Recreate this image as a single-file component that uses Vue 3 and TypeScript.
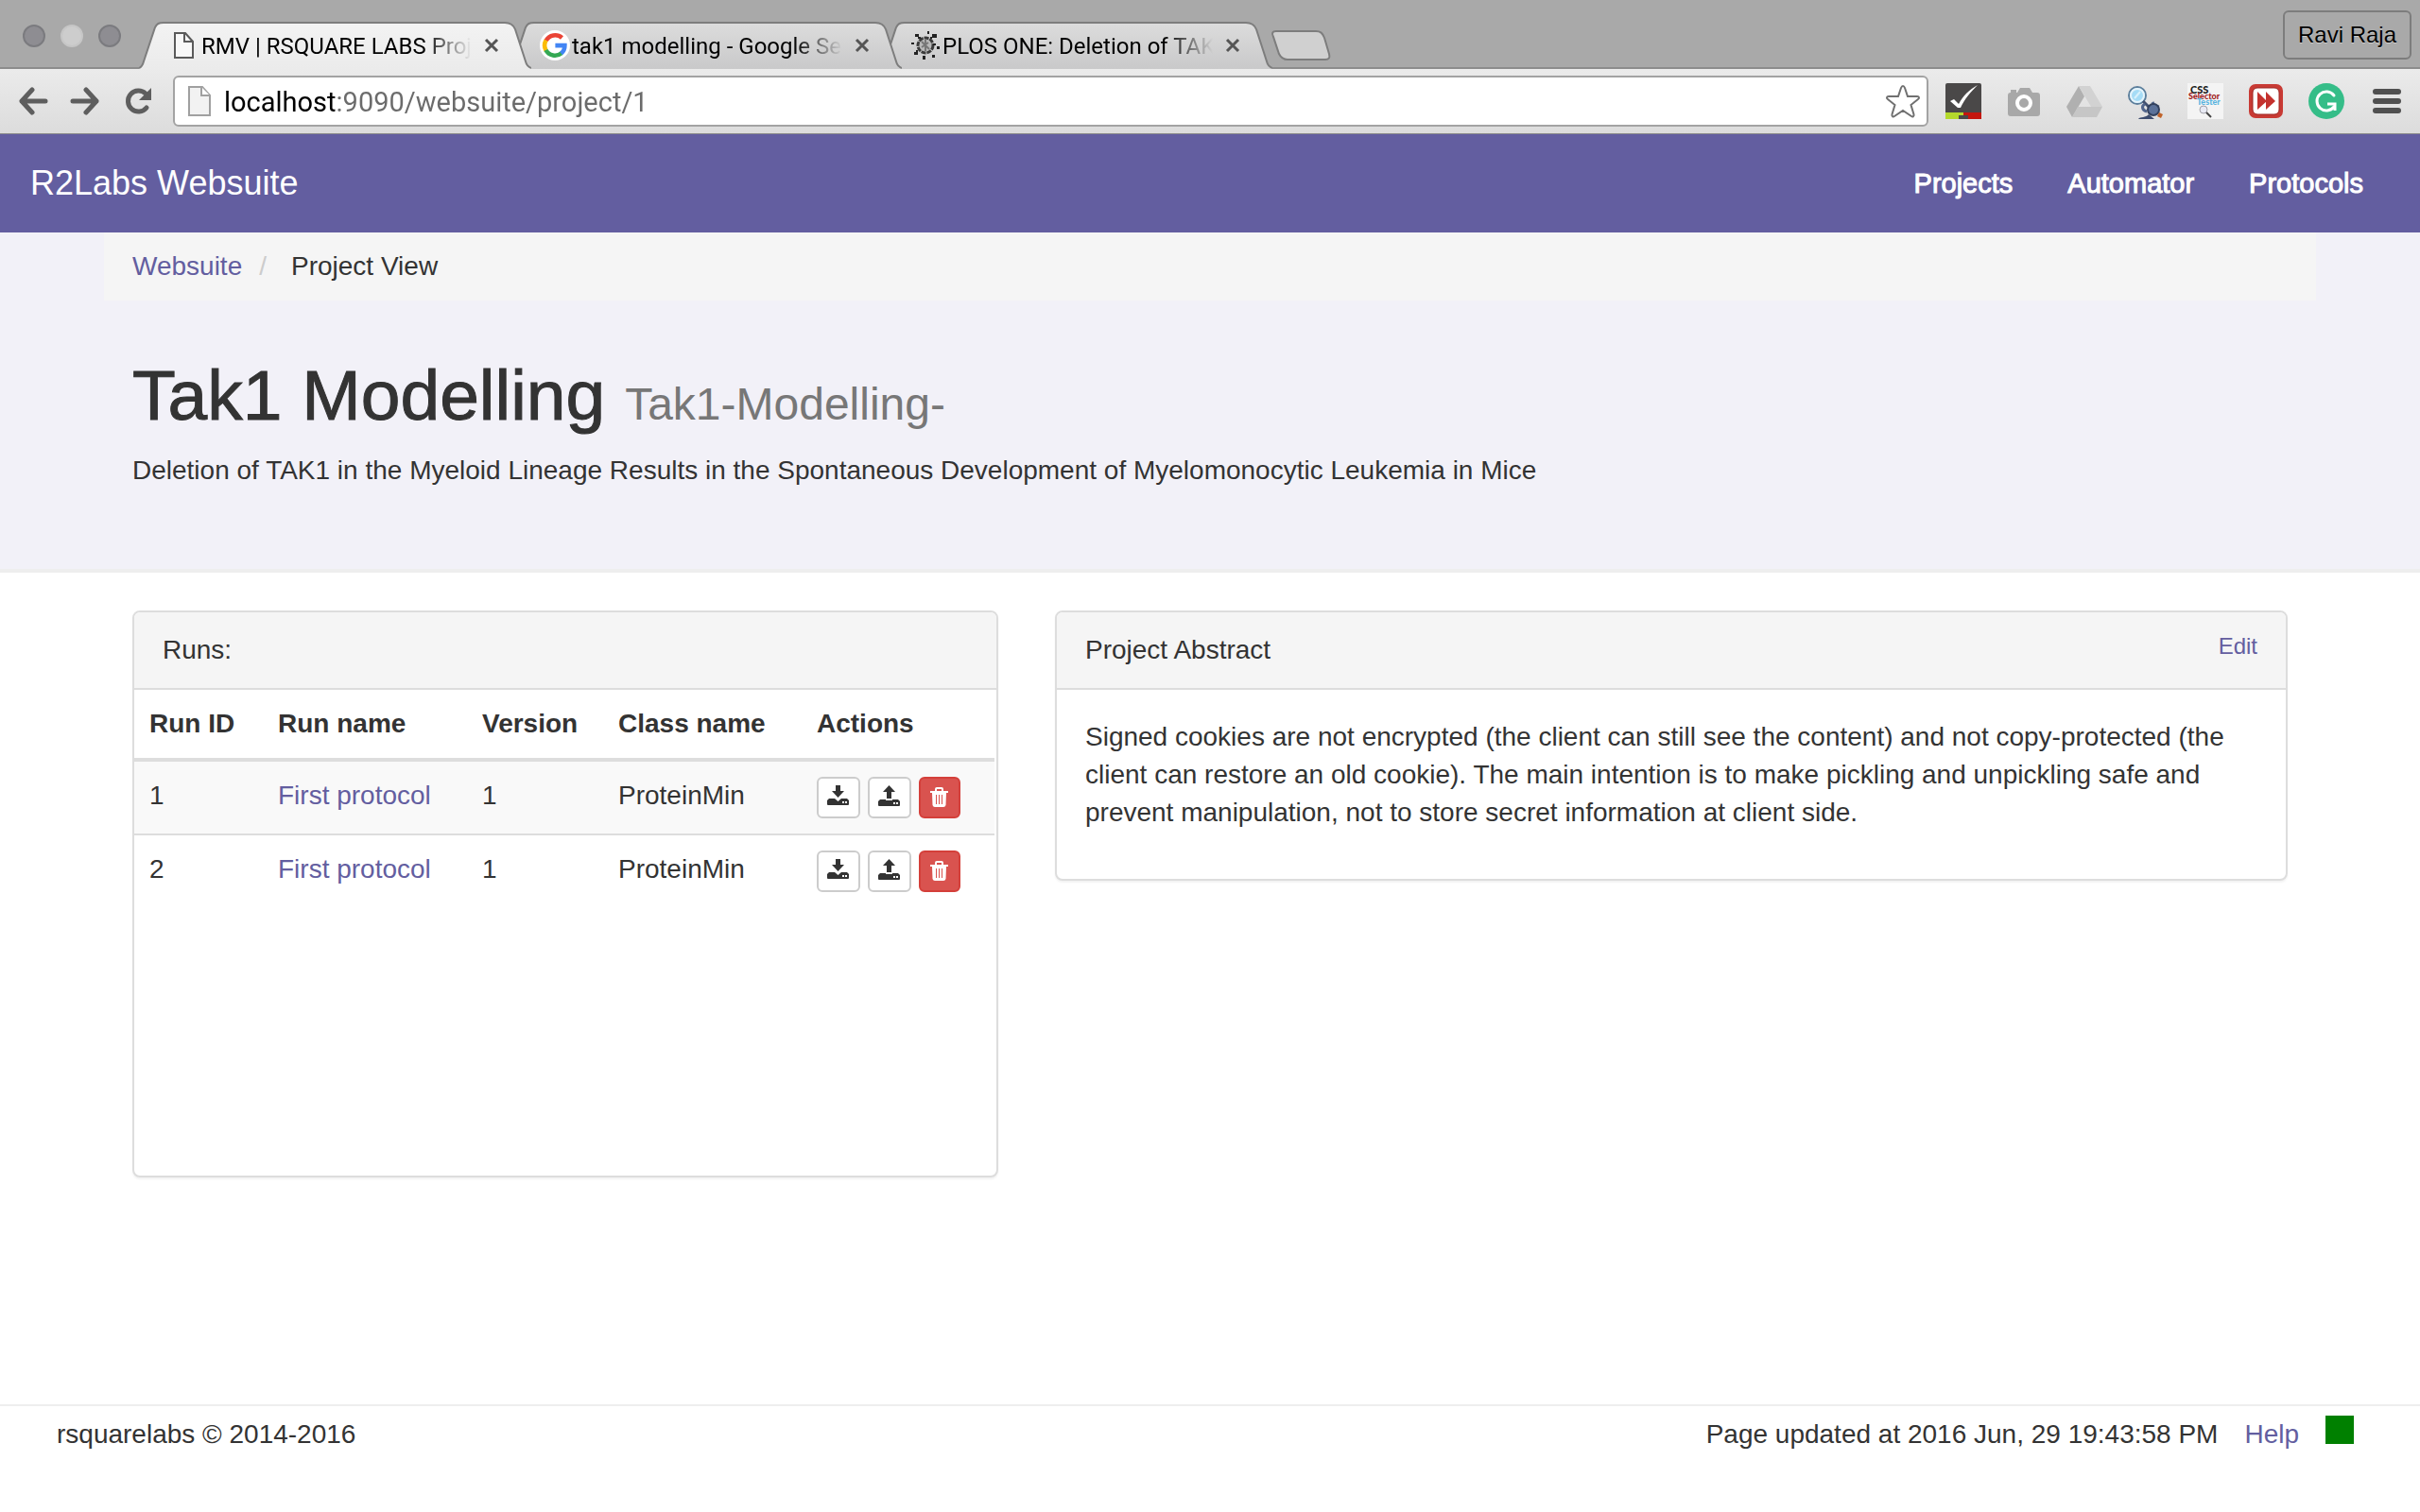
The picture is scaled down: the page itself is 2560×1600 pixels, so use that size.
<script setup lang="ts">
import { ref } from 'vue'

interface Tab {
  id: string
  title: string
  active: boolean
}

interface Run {
  id: number
  name: string
  version: number
  className: string
}

const tabs: Tab[] = [
  { id: 'page', title: 'RMV | RSQUARE LABS Proj', active: true },
  { id: 'google', title: 'tak1 modelling - Google Se', active: false },
  { id: 'plos', title: 'PLOS ONE: Deletion of TAK', active: false },
]

const address = ref('localhost:9090/websuite/project/1')

const navLinks: string[] = ['Projects', 'Automator', 'Protocols']

const columns: string[] = ['Run ID', 'Run name', 'Version', 'Class name', 'Actions']

const runs: Run[] = [
  { id: 1, name: 'First protocol', version: 1, className: 'ProteinMin' },
  { id: 2, name: 'First protocol', version: 1, className: 'ProteinMin' },
]
</script>

<template>
  <div class="window">
    <header class="chrome">
      <div class="tab-strip">
        <div class="lights">
          <span class="light"></span>
          <span class="light pale"></span>
          <span class="light"></span>
        </div>
        <div class="tabs">
          <div v-for="tab in tabs" :key="tab.id" class="tab" :class="{ active: tab.active }">
            <svg class="tab-shape" viewBox="0 0 415 50" preserveAspectRatio="none" aria-hidden="true">
              <defs>
                <linearGradient :id="'fill-' + tab.id" x1="0" y1="0" x2="0" y2="1">
                  <stop offset="0" :stop-color="tab.active ? '#f3f3f3' : '#dcdcdc'" />
                  <stop offset="1" :stop-color="tab.active ? '#ebebeb' : '#c9c9ca'" />
                </linearGradient>
              </defs>
              <path
                d="M0 49C3 48 4 46 5 42L17 6C19 2 21 1 26 1H387C393 1 396 3 398 8L409 42C410 46 412 48 415 49V50H0Z"
                :fill="'url(#fill-' + tab.id + ')'"
              />
              <path
                d="M0 49C3 48 4 46 5 42L17 6C19 2 21 1 26 1H387C393 1 396 3 398 8L409 42C410 46 412 48 415 49"
                fill="none" stroke="#7d7d7d" stroke-width="2"
              />
            </svg>
            <span class="favicon">
              <svg v-if="tab.id === 'page'" width="32" height="32" viewBox="0 0 32 32">
                <path d="M6 3H17L25 12V29H6Z" fill="#f8f8f8" stroke="#5a5a5a" stroke-width="2" />
                <path d="M16 3V12H25" fill="none" stroke="#5a5a5a" stroke-width="2" />
              </svg>
              <svg v-else-if="tab.id === 'google'" width="32" height="32" viewBox="0 0 32 32">
                <circle cx="16" cy="16" r="16" fill="#fff" />
                <path d="M6.6 11A11 11 0 0 1 23.5 8" fill="none" stroke="#ea4335" stroke-width="4.6" />
                <path d="M6.6 10.6A11 11 0 0 0 6.6 21.4" fill="none" stroke="#fbbc05" stroke-width="4.6" />
                <path d="M6.4 21A11 11 0 0 0 23 24.2" fill="none" stroke="#34a853" stroke-width="4.6" />
                <path d="M22.6 24.6A11 11 0 0 0 26.4 16.1H16.4" fill="none" stroke="#4285f4" stroke-width="4.6" />
              </svg>
              <svg v-else width="32" height="32" viewBox="0 0 32 32">
                <circle cx="16" cy="16" r="8" fill="#b9b9b9" stroke="#3a3a3a" stroke-width="3" stroke-dasharray="5 1" />
                <path d="M12 12L20 20M16 10V22M12 18L19 13" stroke="#777" stroke-width="2" />
                <path d="M5 4H9V7H5ZM23 4H28V8H23ZM18 1H20V4H18ZM1 13H4V15H1ZM28 17H31V20H28ZM4 23H8V26H4ZM23 26H26V29H23ZM13 27H16V31H13ZM8 7H11V9H8ZM21 7H23V9H21ZM6 21H8V23H6ZM24 14H27V16H24Z" fill="#222" />
              </svg>
            </span>
            <span class="tab-title">{{ tab.title }}</span>
            <button class="tab-close" type="button" :aria-label="'Close ' + tab.title">
              <svg width="16" height="16" viewBox="0 0 16 16">
                <path d="M2 2L14 14M14 2L2 14" stroke="#555" stroke-width="3" />
              </svg>
            </button>
          </div>
          <button class="new-tab" type="button" aria-label="New tab">
            <svg width="64" height="34" viewBox="0 0 64 34">
              <path d="M6 2H48C53 2 55 4 57 9L62 26C63 30 62 32 58 32H18C13 32 11 30 9 26L3 8C1 4 2 2 6 2Z" fill="#d0d0d0" stroke="#7d7d7d" stroke-width="2" />
            </svg>
          </button>
        </div>
        <button class="profile" type="button">Ravi Raja</button>
      </div>

      <div class="toolbar">
        <button class="tool back" type="button" aria-label="Back">
          <svg width="32" height="30" viewBox="0 0 32 30">
            <path d="M15 3L4 15L15 27M4 15H29" fill="none" stroke="#5e5e5e" stroke-width="5" stroke-linecap="round" stroke-linejoin="round" />
          </svg>
        </button>
        <button class="tool forward" type="button" aria-label="Forward">
          <svg width="32" height="30" viewBox="0 0 32 30">
            <path d="M17 3L28 15L17 27M28 15H3" fill="none" stroke="#5e5e5e" stroke-width="5" stroke-linecap="round" stroke-linejoin="round" />
          </svg>
        </button>
        <button class="tool reload" type="button" aria-label="Reload">
          <svg width="30" height="30" viewBox="0 0 30 30">
            <path d="M23 22A11 11 0 1 1 22 7" fill="none" stroke="#5e5e5e" stroke-width="5" stroke-linecap="round" />
            <path d="M28 1V14H15Z" fill="#5e5e5e" />
          </svg>
        </button>
        <div class="omnibox">
          <svg width="24" height="32" viewBox="0 0 24 32" aria-hidden="true">
            <path d="M1 1H15L23 10V31H1Z" fill="#f2f2f2" stroke="#a0a0a0" stroke-width="2" />
            <path d="M14 1V10H23" fill="#fff" stroke="#a0a0a0" stroke-width="2" />
          </svg>
          <input v-model="address" class="address" type="text" aria-label="Address" spellcheck="false" />
          <button class="tool" type="button" aria-label="Bookmark this page">
            <svg width="38" height="38" viewBox="0 0 38 38">
              <path d="M19 3C20 3 20.600 4 21 5L24 14H34C36.500 14 36.500 16 35 17L27.500 23L30.500 33C31 35 29.500 36 28 35L19 29L10 35C8.500 36 7 35 7.500 33L10.500 23L3 17C1.500 16 1.500 14 4 14H14L17 5C17.400 4 18 3 19 3Z" fill="#fff" stroke="#707070" stroke-width="2" />
            </svg>
          </button>
        </div>
        <div class="extensions">
          <button class="tool" type="button" aria-label="Checker">
            <svg width="38" height="38" viewBox="0 0 38 38">
              <rect width="38" height="38" rx="2" fill="#4a4848" />
              <rect y="31" width="19" height="7" fill="#b4d92c" />
              <rect x="19" y="31" width="19" height="7" fill="#c4160e" />
              <path d="M14 34H24V38H14Z" fill="#4a4848" />
              <path d="M5 19L9 17L14 22C19 13 25 7 34 2C27 9 20 17 16 26H13Z" fill="#fff" />
            </svg>
          </button>
          <button class="tool" type="button" aria-label="Screenshot">
            <svg width="38" height="38" viewBox="0 0 38 38">
              <path d="M5 10V7H11V10H12L15 5H25L28 10H33C35 10 36 11 36 13V32C36 34 35 35 33 35H5C3 35 2 34 2 32V13C2 11 3 10 5 10Z" fill="#a8a8a8" />
              <circle cx="19" cy="21" r="7" fill="#a8a8a8" stroke="#fff" stroke-width="4" />
            </svg>
          </button>
          <button class="tool" type="button" aria-label="Drive">
            <svg width="38" height="38" viewBox="0 0 38 38">
              <path d="M13 3L0 25L6 36L19 14Z" fill="#b0b0b0" />
              <path d="M13 3H25L38 25H26Z" fill="#d2d2d2" />
              <path d="M12 25H38L32 36H6Z" fill="#c6c6c6" />
            </svg>
          </button>
          <button class="tool" type="button" aria-label="Inspector">
            <svg width="38" height="38" viewBox="0 0 38 38">
              <circle cx="11" cy="13" r="9" fill="#a5dcf6" stroke="#5d7f9c" stroke-width="2" />
              <circle cx="11" cy="13" r="7" fill="none" stroke="#e6f4fb" stroke-width="2" />
              <path d="M8 16L14 9" stroke="#d8f1fb" stroke-width="2" />
              <path d="M17 19L25 27" stroke="#42506f" stroke-width="3" />
              <path d="M19 22C15 24 16 29 21 30M27 20L29 24L34 25" fill="none" stroke="#51658c" stroke-width="3" />
              <circle cx="28" cy="28" r="6" fill="#5b7199" stroke="#33415e" stroke-width="2" />
              <path d="M12 38C14 35 20 37 23 33L29 38Z" fill="#3b4b6e" />
              <path d="M34 31L38 33L36 37L32 35Z" fill="#c0632a" />
            </svg>
          </button>
          <button class="tool" type="button" aria-label="CSS Selector Tester">
            <svg width="38" height="38" viewBox="0 0 38 38">
              <rect width="38" height="38" fill="#f4f4f4" />
              <text x="3" y="11" class="glyph css">CSS</text>
              <text x="1" y="17" class="glyph selector">Selector</text>
              <text x="10" y="23" class="glyph tester">Tester</text>
              <circle cx="17" cy="28" r="4" fill="#e8eaf4" stroke="#a0a0a8" stroke-width="1" />
              <path d="M20 31L25 36" stroke="#444" stroke-width="2" />
            </svg>
          </button>
          <button class="tool" type="button" aria-label="Fast forward">
            <svg width="38" height="38" viewBox="0 0 38 38">
              <rect x="1" y="1" width="36" height="36" rx="7" fill="#c83a34" />
              <rect x="5" y="5" width="28" height="28" rx="5" fill="#fff" stroke="#9c2622" stroke-width="1" />
              <path d="M10 9L20 19L10 28ZM19 9L29 19L19 28Z" fill="#c4322e" />
            </svg>
          </button>
          <button class="tool" type="button" aria-label="Grammar">
            <svg width="38" height="38" viewBox="0 0 38 38">
              <circle cx="19" cy="19" r="19" fill="#35bd88" />
              <path d="M27 13A10 10 0 1 0 27 25" fill="none" stroke="#fff" stroke-width="3" stroke-linecap="round" />
              <path d="M20 22H28V29" fill="none" stroke="#fff" stroke-width="3" />
            </svg>
          </button>
          <button class="tool" type="button" aria-label="Menu">
            <svg width="38" height="38" viewBox="0 0 38 38">
              <path d="M7 9H31M7 19H31M7 29H31" stroke="#505050" stroke-width="6" stroke-linecap="round" />
            </svg>
          </button>
        </div>
      </div>
    </header>

    <nav class="navbar">
      <a class="brand" href="#">R2Labs Websuite</a>
      <ul class="nav-links">
        <li v-for="link in navLinks" :key="link"><a href="#">{{ link }}</a></li>
      </ul>
    </nav>

    <section class="page-header">
      <ol class="breadcrumb">
        <li><a href="#">Websuite</a></li>
        <li class="divider">/</li>
        <li>Project View</li>
      </ol>
      <h1>Tak1 Modelling <small>Tak1-Modelling-</small></h1>
      <p>Deletion of TAK1 in the Myeloid Lineage Results in the Spontaneous Development of Myelomonocytic Leukemia in Mice</p>
    </section>

    <main class="content">
      <section class="panel runs">
        <div class="panel-head">Runs:</div>
        <table>
          <colgroup>
            <col class="c-id" />
            <col class="c-name" />
            <col class="c-version" />
            <col class="c-class" />
            <col />
          </colgroup>
          <thead>
            <tr><th v-for="column in columns" :key="column" scope="col">{{ column }}</th></tr>
          </thead>
          <tbody>
            <tr v-for="run in runs" :key="run.id">
              <td>{{ run.id }}</td>
              <td><a href="#">{{ run.name }}</a></td>
              <td>{{ run.version }}</td>
              <td>{{ run.className }}</td>
              <td>
                <div class="actions">
                  <button class="action" type="button" aria-label="Download run">
                    <svg width="24" height="24" viewBox="0 0 24 24">
                      <path d="M9 1H14V7H18L11.500 14L5 7H9Z" fill="#333" />
                      <path fill-rule="evenodd" d="M2 15H8L11.500 18L15 15H21L23 17V21Q23 22 22 22H1Q0 22 0 21V17ZM16 18V20H18V18ZM19 18V20H21V18Z" fill="#333" />
                    </svg>
                  </button>
                  <button class="action" type="button" aria-label="Upload run">
                    <svg width="24" height="24" viewBox="0 0 24 24">
                      <path d="M11.500 1L18 8H14V15H9V8H5Z" fill="#333" />
                      <path fill-rule="evenodd" d="M2 16H8V17H15V16H21L23 18V22Q23 23 22 23H1Q0 23 0 22V18ZM16 19V21H18V19ZM19 19V21H21V19Z" fill="#333" />
                    </svg>
                  </button>
                  <button class="action danger" type="button" aria-label="Delete run">
                    <svg width="24" height="24" viewBox="0 0 24 24">
                      <path d="M8 5V3Q8 2 9 2H14Q15 2 15 3V5" fill="none" stroke="#fff" stroke-width="2" />
                      <path d="M2 5H21V7H2Z" fill="#fff" />
                      <path fill-rule="evenodd" d="M4 7H19L18.500 20Q18 22 16 22H7Q5 22 4.500 20ZM8 9V19H9V9ZM11 9V19H12V9ZM14 9V19H15V9Z" fill="#fff" />
                    </svg>
                  </button>
                </div>
              </td>
            </tr>
          </tbody>
        </table>
      </section>

      <section class="panel abstract">
        <div class="panel-head">
          <span>Project Abstract</span>
          <a class="edit" href="#">Edit</a>
        </div>
        <p>
          Signed cookies are not encrypted (the client can still see the content) and not copy-protected (the
          client can restore an old cookie). The main intention is to make pickling and unpickling safe and
          prevent manipulation, not to store secret information at client side.
        </p>
      </section>
    </main>

    <footer class="footer">
      <span>rsquarelabs © 2014-2016</span>
      <div class="status">
        <span>Page updated at 2016 Jun, 29 19:43:58 PM</span>
        <a href="#">Help</a>
        <span class="indicator"></span>
      </div>
    </footer>
  </div>
</template>

<style>
body {
  margin: 0;
  background: #fff;
}
</style>

<style scoped>
.window {
  display: flex;
  flex-direction: column;
  min-height: 100vh;
  color: #333;
  font: 28px/40px "Liberation Sans", Arial, sans-serif;
}

.window *,
.window {
  box-sizing: border-box;
}

a {
  color: #635ea0;
  text-decoration: none;
}

button {
  margin: 0;
  padding: 0;
  border: 0;
  background: none;
  color: inherit;
  font: inherit;
}

svg {
  display: block;
}

/* Browser frame */
.tab-strip {
  display: flex;
  align-items: flex-end;
  height: 73px;
  padding-right: 9px;
  background: #a9a9a9;
  box-shadow: inset 0 -2px #8c8c8c;
}

.lights {
  display: flex;
  gap: 16px;
  width: 147px;
  padding: 0 0 23px 24px;
}

.light {
  width: 24px;
  height: 24px;
  border: 2px solid #7b7b7f;
  border-radius: 50%;
  background: #8e8d92;
}

.light.pale {
  border-color: #c6c6c6;
  background: #cdcdcd;
}

.tabs {
  display: flex;
  align-items: center;
  flex: 1;
}

.tab {
  position: relative;
  z-index: 1;
  display: flex;
  align-items: center;
  flex: none;
  width: 415px;
  height: 50px;
  padding: 0 32px;
}

.tab + .tab {
  margin-left: -23px;
}

.tab:nth-child(2) {
  z-index: 2;
}

.tab.active {
  z-index: 3;
}

.tab-shape {
  position: absolute;
  inset: 0;
  width: 100%;
  height: 100%;
}

.favicon {
  position: relative;
  margin-right: 2px;
}

.tab-title {
  position: relative;
  width: 286px;
  padding-top: 2px;
  color: #000;
  font: 24px/32px Roboto, "Noto Sans", sans-serif;
  white-space: nowrap;
  mask-image: linear-gradient(90deg, #000 82%, transparent);
}

.tab-close {
  position: relative;
  margin-left: 13px;
}

.new-tab {
  margin-left: -2px;
}

.profile {
  align-self: center;
  width: 136px;
  height: 52px;
  border: 2px solid #7d7d7d;
  border-radius: 6px;
  color: #000;
  font-size: 24px;
  text-shadow: 0 1px #cfcfcf;
}

.toolbar {
  display: flex;
  align-items: center;
  height: 69px;
  padding: 0 16px 0 19px;
  border-bottom: 1px solid #8a8a8a;
  background: linear-gradient(#ebebeb, #dcdcdc);
}

.forward {
  margin-left: 23px;
}

.reload {
  margin: 0 21px 0 26px;
}

.omnibox {
  display: flex;
  align-items: center;
  flex: 1;
  height: 54px;
  padding: 0 6px 0 14px;
  border: 2px solid #a3a3a3;
  border-radius: 6px;
  background: #fff;
}

.address {
  flex: 1;
  min-width: 0;
  height: 42px;
  margin-left: 14px;
  padding: 2px 0 0;
  border: 0;
  outline: 0;
  background: linear-gradient(90deg, #000 120px, #6b6b6b 120px);
  background-clip: text;
  color: #6b6b6b;
  font: 29px/40px Roboto, "Noto Sans", sans-serif;
  -webkit-text-fill-color: transparent;
}

.extensions {
  display: flex;
  gap: 26px;
  margin-left: 18px;
}

.glyph {
  font-family: Lato, sans-serif;
  font-size: 9px;
  font-weight: 900;
}

.css {
  font-size: 11px;
  fill: #222;
}

.selector {
  fill: #a01c1c;
}

.tester {
  fill: #5bb4e0;
}

/* Site */
.navbar {
  display: flex;
  align-items: center;
  justify-content: space-between;
  height: 104px;
  padding: 0 60px 0 32px;
  background: #635ea0;
}

.navbar a {
  color: #fff;
}

.brand {
  font-size: 36px;
}

.nav-links {
  display: flex;
  gap: 58px;
  margin: 0;
  padding: 0;
  font-size: 29px;
  list-style: none;
  -webkit-text-stroke: 1px #fff;
}

.page-header {
  height: 360px;
  padding: 0 110px;
  border-bottom: 4px solid #eee;
  background: #f2f1f8;
}

.breadcrumb {
  display: flex;
  height: 72px;
  margin: 0;
  padding: 16px 30px;
  background: #f5f5f5;
  list-style: none;
}

.divider {
  margin: 0 26px 0 18px;
  color: #ccc;
}

h1 {
  margin: 60px 30px 10px;
  font-size: 75px;
  font-weight: 400;
  line-height: 80px;
  -webkit-text-stroke: 1px #333;
}

h1 small {
  color: #777;
  font-size: 48px;
  -webkit-text-stroke: 0;
}

.page-header p {
  margin: 0 30px;
}

.content {
  display: grid;
  grid-template-columns: 916fr 1304fr;
  align-items: start;
  gap: 60px;
  padding: 40px 140px;
}

.panel {
  border: 2px solid #ddd;
  border-radius: 8px;
  background: #fff;
  box-shadow: 0 2px 2px rgba(0, 0, 0, 0.05);
}

.panel-head {
  display: flex;
  justify-content: space-between;
  padding: 20px 30px;
  border-bottom: 2px solid #ddd;
  border-radius: 6px 6px 0 0;
  background: #f5f5f5;
}

.runs {
  min-height: 600px;
}

.edit {
  font-size: 24px;
  line-height: 32px;
}

.abstract p {
  margin: 30px 30px 50px;
}

table {
  width: calc(100% - 2px);
  border-collapse: separate;
  border-spacing: 0;
  table-layout: fixed;
}

.c-id {
  width: 136px;
}

.c-name {
  width: 216px;
}

.c-version {
  width: 144px;
}

.c-class {
  width: 210px;
}

th,
td {
  padding: 16px;
  text-align: left;
  vertical-align: top;
}

th {
  border-bottom: 4px solid #ddd;
}

tbody tr:nth-child(odd) td {
  border-bottom: 2px solid #ddd;
  background: #f9f9f9;
}

.actions {
  display: flex;
  gap: 8px;
}

.action {
  display: flex;
  align-items: flex-start;
  justify-content: center;
  width: 46px;
  height: 44px;
  padding-top: 6px;
  border: 2px solid #ccc;
  border-radius: 6px;
  background: #fff;
}

.action.danger {
  width: 44px;
  padding-top: 8px;
  border-color: #d43f3a;
  background: #d9534f;
}

.footer {
  display: flex;
  justify-content: space-between;
  height: 114px;
  margin-top: auto;
  padding: 10px 70px 0 60px;
  border-top: 2px solid #eee;
}

.status {
  display: flex;
  gap: 28px;
}

.indicator {
  width: 30px;
  height: 30px;
  background: green;
}
</style>
